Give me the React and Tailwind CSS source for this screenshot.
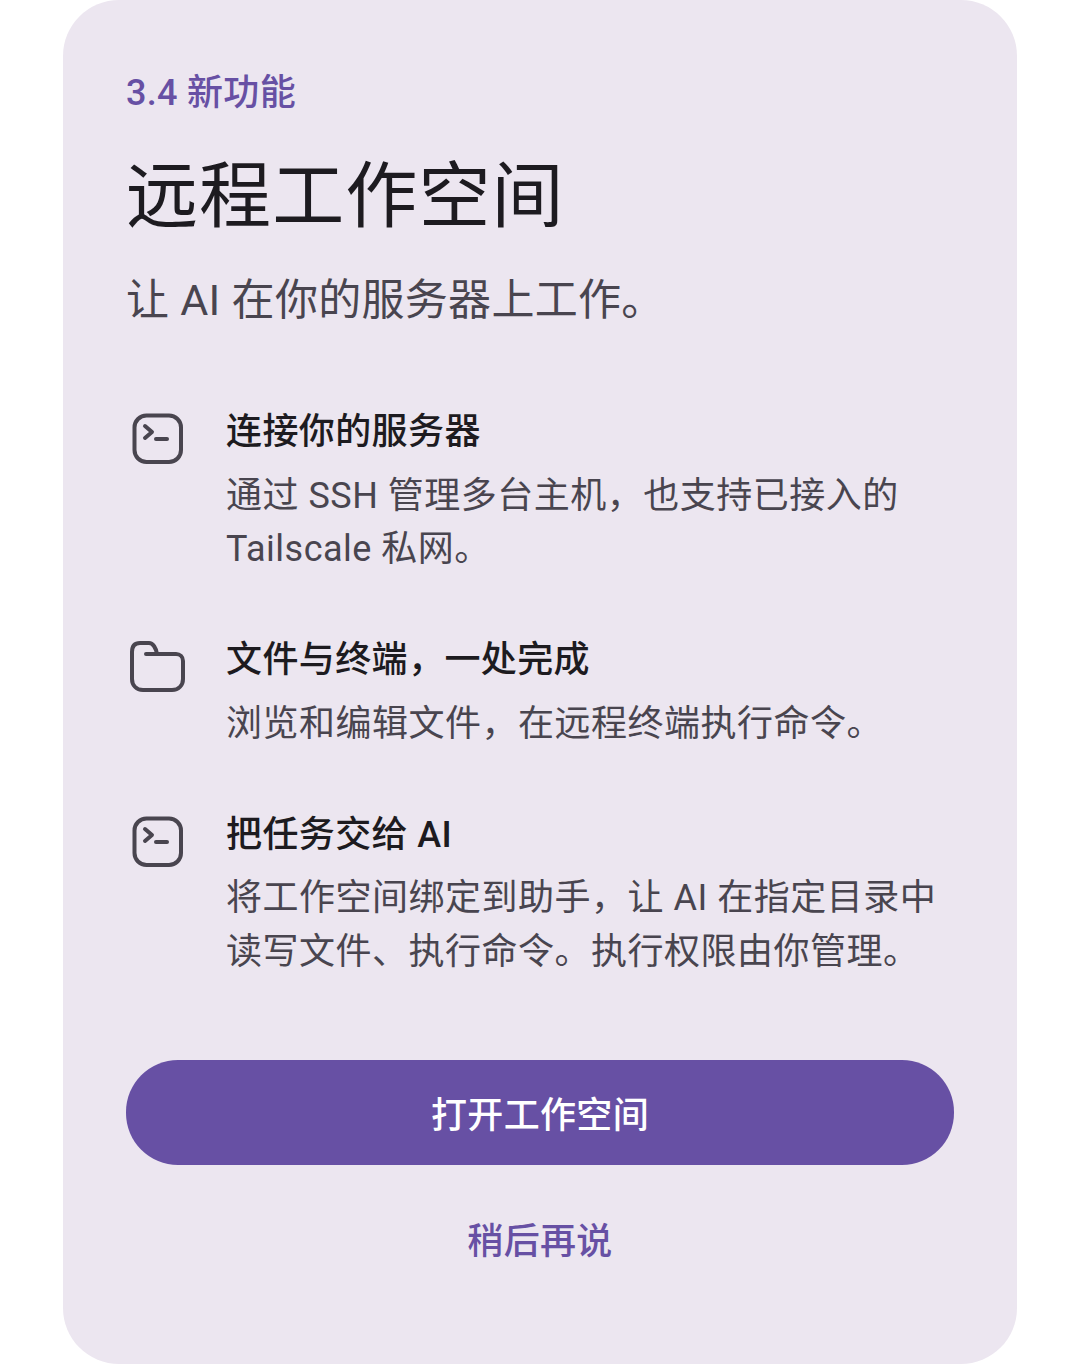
const TerminalIcon = () => (
  <svg width="60" height="64" viewBox="0 0 60 64" fill="none" stroke="#49454f" strokeWidth="4" strokeLinecap="round" strokeLinejoin="round">
    <rect x="8.5" y="10.5" width="46.5" height="46.5" rx="12" />
    <path d="M19 21l7 6-7 6" />
    <path d="M30 34h11" />
  </svg>
);

const FolderIcon = () => (
  <svg width="60" height="64" viewBox="0 0 60 64" fill="none" stroke="#49454f" strokeWidth="4" strokeLinecap="round" strokeLinejoin="round">
    <path d="M20 21H50c4 0 7 3 7 7V46c0 6-4 11-11 11H17c-7 0-11-5-11-11V19c0-6 3-9 8-9h9c4 0 7 5 8 11" />
  </svg>
);

function Feature({ icon, title, children }) {
  return (
    <div className="flex">
      <div className="w-[100px] shrink-0">{icon}</div>
      <div>
        <h3 className="text-[36px] leading-[54px] font-medium tracking-[0.4px] text-[#1d1b20]">{title}</h3>
        <p className="mt-[10.5px] text-[36px] leading-[53.5px] tracking-[0.5px] text-[#49454f]">{children}</p>
      </div>
    </div>
  );
}

export default function App() {
  return (
    <div className="bg-white h-[1364px] px-[63px] font-['Roboto','Noto_Sans_CJK_SC',sans-serif]">
      <div className="h-full bg-[#ece6f0] rounded-[56px] px-[63px] pt-[65px]">
        <p className="text-[36px] leading-[56px] font-medium tracking-[0.3px] text-[#6750a4]">3.4 新功能</p>
        <h1 className="mt-[32px] text-[72px] leading-[88px] tracking-[1.1px] text-[#1d1b20]">远程工作空间</h1>
        <p className="mt-[27px] text-[43px] leading-[64px] tracking-[0.3px] text-[#49454f]">让 AI 在你的服务器上工作。</p>
        <div className="mt-[73px] flex flex-col gap-[56.5px]">
          <Feature icon={<TerminalIcon />} title="连接你的服务器">
            通过 SSH 管理多台主机，也支持已接入的
            <br />
            Tailscale 私网。
          </Feature>
          <Feature icon={<FolderIcon />} title="文件与终端，一处完成">
            浏览和编辑文件，在远程终端执行命令。
          </Feature>
          <Feature icon={<TerminalIcon />} title="把任务交给 AI">
            将工作空间绑定到助手，让 AI 在指定目录中
            <br />
            读写文件、执行命令。执行权限由你管理。
          </Feature>
        </div>
        <button className="mt-[80.5px] w-full h-[105px] rounded-[52px] bg-[#6750a4] pt-[7px] text-white text-[36px] font-medium tracking-[0.35px]">
          打开工作空间
        </button>
        <button className="mt-[23px] w-full h-[108px] text-[36px] font-medium tracking-[0.35px] text-[#6750a4]">稍后再说</button>
      </div>
    </div>
  );
}
